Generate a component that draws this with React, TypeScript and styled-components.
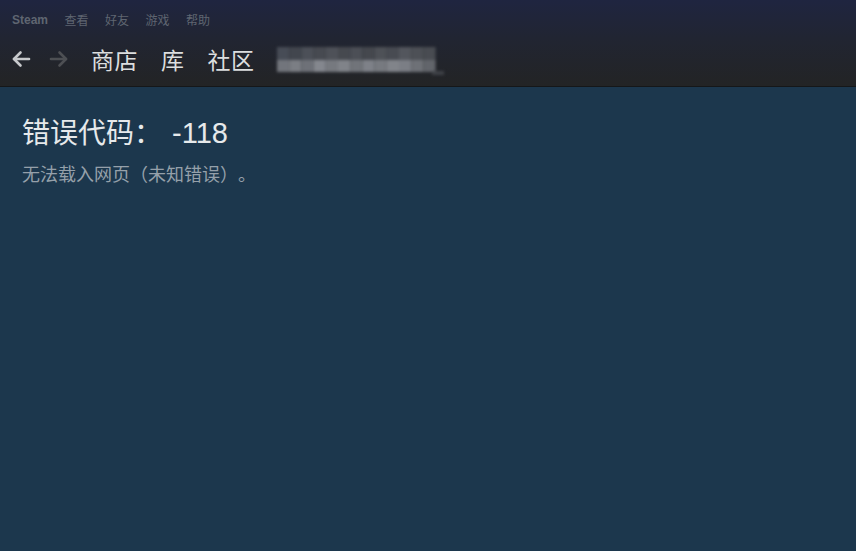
import React from "react";
import styled, { createGlobalStyle } from "styled-components";

const Global = createGlobalStyle`
  html, body { margin: 0; padding: 0; background: #1c374d; }
  body { font-family: "Liberation Sans", "Noto Sans CJK SC", sans-serif; text-spacing-trim: space-all; }
  #root { min-height: 551px; }
`;

const Page = styled.div`
  width: 856px;
  height: 551px;
  display: flex;
  flex-direction: column;
  background: #1c374d;
  overflow: hidden;
`;

const Header = styled.header`
  height: 86px;
  background: linear-gradient(180deg, #1f2540 0%, #212532 45%, #232425 100%);
  border-bottom: 1px solid #151719;
  display: flex;
  flex-direction: column;
`;

const MenuBar = styled.nav`
  height: 40px;
  display: flex;
  align-items: center;
  gap: 16.5px;
  padding-left: 12px;
`;

const MenuItem = styled.span<{ $latin?: boolean }>`
  font-family: ${(p) => (p.$latin ? '"Liberation Sans", "Noto Sans CJK SC", sans-serif' : '"Noto Sans CJK SC", sans-serif')};
  font-size: 12px;
  font-weight: ${(p) => (p.$latin ? 700 : 400)};
  color: #5f6571;
`;

const NavBar = styled.div`
  flex: 1;
  display: flex;
  align-items: center;
  padding-left: 11px;
  padding-bottom: 7px;
`;

const ArrowButton = styled.span<{ $dim?: boolean }>`
  width: 20px;
  height: 20px;
  display: flex;
  align-items: center;
  justify-content: center;
  margin-right: ${(p) => (p.$dim ? "0" : "18px")};
  color: ${(p) => (p.$dim ? "#4d4f53" : "#c7c9cc")};
`;

const NavLinks = styled.div`
  display: flex;
  align-items: center;
  gap: 23px;
  margin-left: 22px;
`;

const NavLink = styled.span`
  font-family: "Noto Sans CJK SC", sans-serif;
  font-size: 23px;
  color: #dcdedf;
  letter-spacing: 0.5px;
`;

const Blur = styled.div`
  margin-left: 22px;
  margin-top: 8px;
  filter: blur(1.5px);
  display: flex;
`;

const Content = styled.main`
  padding: 25px 22px;
  display: flex;
  flex-direction: column;
  gap: 8px;
`;

const Title = styled.h1`
  margin: 0;
  font-family: "Noto Sans CJK SC", sans-serif;
  font-size: 28px;
  font-weight: 400;
  color: #e6e9eb;
  line-height: 38px;
  text-spacing-trim: space-all;
`;

const Latin = styled.span`
  font-family: "Liberation Sans", sans-serif;
  font-size: 29px;
  margin-left: 10px;
`;

const Message = styled.p`
  margin: 0;
  font-family: "Noto Sans CJK SC", sans-serif;
  font-size: 18px;
  color: #95a0aa;
  line-height: 26px;
  text-spacing-trim: space-all;
`;

const Arrow = ({ dir }: { dir: "left" | "right" }) => (
  <svg width="20" height="18" viewBox="0 0 20 18">
    <g
      transform={dir === "right" ? "translate(20,0) scale(-1,1)" : undefined}
      fill="none"
      stroke="currentColor"
      strokeWidth="2.6"
      strokeLinecap="round"
      strokeLinejoin="round"
    >
      <path d="M18 9 H3" />
      <path d="M9.5 2.5 L3 9 L9.5 15.5" />
    </g>
  </svg>
);

const topCols = ["#474c56", "#42464e", "#4c5058", "#474a51", "#4e5158", "#46494f", "#4c4f56", "#45484e", "#4e5157", "#484b52", "#53565d", "#4d5056", "#494c52"];
const botCols = ["#72757c", "#7b7e84", "#6e7178", "#84878e", "#76797f", "#808389", "#71747a", "#7e8188", "#777a80", "#81848a", "#7b7e85", "#6e7177", "#62656b"];

const Mosaic = () => (
  <svg width="170" height="32" viewBox="0 0 170 32">
    {topCols.map((c, i) => (
      <rect key={"t" + i} x={i * 12.2} y={0} width={12.2} height={13} fill={c} />
    ))}
    {botCols.map((c, i) => (
      <rect key={"b" + i} x={i * 12.2} y={13} width={12.2} height={12} fill={c} />
    ))}
    <rect x={155} y={24} width={12} height={4} fill="#3f4248" />
  </svg>
);

export default function App() {
  return (
    <Page>
      <Global />
      <Header>
        <MenuBar>
          <MenuItem $latin>Steam</MenuItem>
          <MenuItem>查看</MenuItem>
          <MenuItem>好友</MenuItem>
          <MenuItem>游戏</MenuItem>
          <MenuItem>帮助</MenuItem>
        </MenuBar>
        <NavBar>
          <ArrowButton>
            <Arrow dir="left" />
          </ArrowButton>
          <ArrowButton $dim>
            <Arrow dir="right" />
          </ArrowButton>
          <NavLinks>
            <NavLink>商店</NavLink>
            <NavLink>库</NavLink>
            <NavLink>社区</NavLink>
          </NavLinks>
          <Blur>
            <Mosaic />
          </Blur>
        </NavBar>
      </Header>
      <Content>
        <Title>
          错误代码：<Latin>-118</Latin>
        </Title>
        <Message>无法载入网页（未知错误）。</Message>
      </Content>
    </Page>
  );
}
